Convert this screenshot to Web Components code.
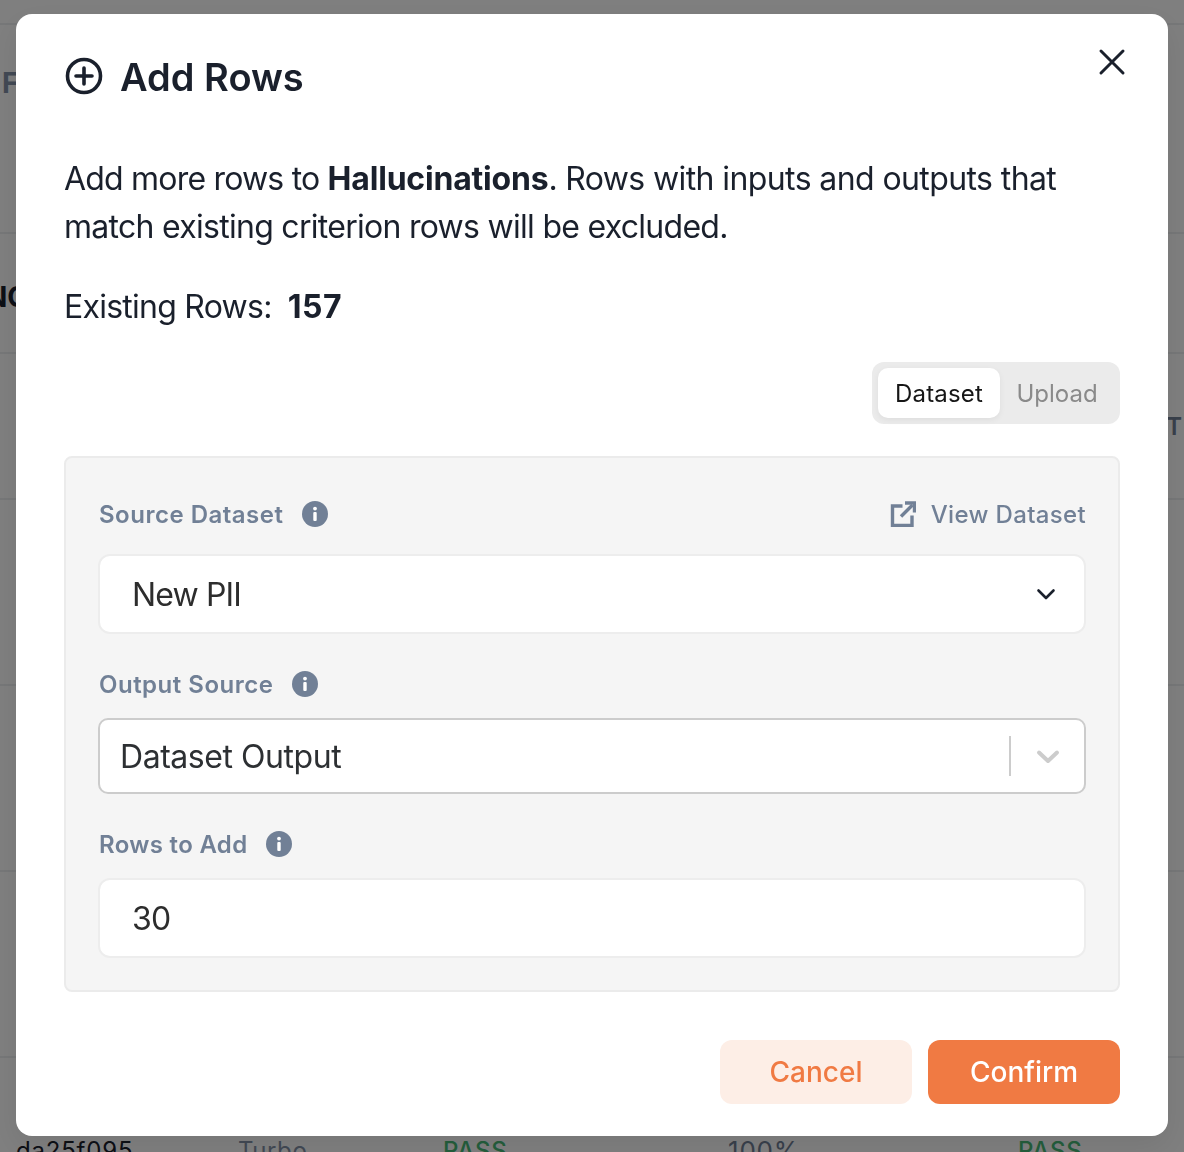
<!DOCTYPE html>
<html lang="en">
<head>
<meta charset="utf-8">
<title>Add Rows</title>
<style>
  html, body { margin: 0; height: 100%; background: #fff; overflow: hidden; }
  body { font-family: Inter, "Liberation Sans", sans-serif; color: #1a202c; }
</style>
</head>
<body>
<page-behind></page-behind>
<add-rows-modal dataset="Hallucinations" existing="157"></add-rows-modal>

<script>
const infoIcon = `
  <svg width="26" height="26" viewBox="0 0 26 26" aria-hidden="true">
    <circle cx="13" cy="13" r="13" fill="#718096"/>
    <circle cx="13" cy="7.6" r="1.9" fill="#fff"/>
    <rect x="11.3" y="11" width="3.4" height="9" rx="1" fill="#fff"/>
  </svg>`

class PageBehind extends HTMLElement {
  constructor() {
    super()
    this.attachShadow({ mode: 'open' })
  }

  connectedCallback() {
    this.shadowRoot.innerHTML = `
      <style>
        :host { display: block; height: 1152px; overflow: hidden; }
        .row { border-top: 2px solid #eceef1; box-sizing: border-box; display: flex; font-size: 24px; }
        .first { height: 23px; border: 0; }
        .head { height: 209px; color: #8492a8; font-size: 28px; font-weight: 700; padding: 41px 0 0 2px; }
        .nc { height: 120px; padding: 46px 0 0 0; font-size: 28px; font-weight: 700; color: #1a202c; margin-left: -14px; }
        .t { height: 146px; padding: 58px 2px 0 0; justify-content: flex-end; font-size: 24px; font-weight: 600; color: #718096; }
        .plain { height: 186px; }
        .last { height: 96px; padding-top: 78px; position: relative; letter-spacing: .8px; }
        .last span { position: absolute; top: 78px; line-height: 30px; }
        .pass { color: #48bb78; font-weight: 500; }
        .soft { color: #8492a8; }
        .muted { color: #718096; font-size: 26px; }
      </style>
      <div class="row first"></div>
      <div class="row head">F</div>
      <div class="row nc">NC</div>
      <div class="row t">T</div>
      <div class="row plain"></div>
      <div class="row plain"></div>
      <div class="row plain"></div>
      <div class="row last">
        <span style="left:16px">da25f095</span>
        <span class="soft" style="left:238px;letter-spacing:.6px">Turbo</span>
        <span class="pass" style="left:443px">PASS</span>
        <span class="muted" style="left:728px">100%</span>
        <span class="pass" style="left:1018px">PASS</span>
      </div>
    `
  }
}

class SegmentToggle extends HTMLElement {
  constructor() {
    super()
    this.attachShadow({ mode: 'open' })
  }

  connectedCallback() {
    this.shadowRoot.innerHTML = `
      <style>
        :host { display: flex; justify-content: flex-end; }
        .wrap { display: flex; background: #ebebeb; border-radius: 12px; padding: 6px; height: 62px; box-sizing: border-box; }
        .seg { font-size: 24px; width: 114px; height: 50px; display: flex; align-items: center; justify-content: center; color: #8a8a8a; border-radius: 10px; }
        .on { width: 122px; background: #fff; color: #161616; letter-spacing: .15px; box-shadow: 0 2px 6px rgba(0,0,0,.06); }
      </style>
      <div class="wrap">
        <div class="seg on">Dataset</div>
        <div class="seg">Upload</div>
      </div>
    `
  }
}

class FieldLabel extends HTMLElement {
  constructor() {
    super()
    this.attachShadow({ mode: 'open' })
  }

  connectedCallback() {
    this.shadowRoot.innerHTML = `
      <style>
        :host { display: flex; align-items: center; gap: 19px; padding-left: 1px; font-size: 24px; font-weight: 600; color: #718096; letter-spacing: .5px; height: 30px; }
        svg { display: block; }
      </style>
      <slot></slot>${infoIcon}
    `
  }
}

class ValueBox extends HTMLElement {
  constructor() {
    super()
    this.attachShadow({ mode: 'open' })
  }

  connectedCallback() {
    const kind = this.getAttribute('kind')
    let tail = ''
    if (kind === 'select') {
      tail = `<svg class="chev" width="24" height="24" viewBox="0 0 24 24" fill="none" stroke="#1a202c" stroke-width="2.6" stroke-linecap="round" stroke-linejoin="round"><path d="M4.500 8.500 12 16 19.500 8.500"/></svg>`
    }
    if (kind === 'control') {
      tail = `<i class="sep"></i><svg class="chev2" width="24" height="24" viewBox="0 0 24 24" fill="none" stroke="#cccccc" stroke-width="4" stroke-linecap="round" stroke-linejoin="round"><path d="M3 8.500 12 17 21 8.500"/></svg>`
    }
    this.shadowRoot.innerHTML = `
      <style>
        :host { display: flex; align-items: center; box-sizing: border-box; height: 80px; background: #fff; border: 2px solid #ededed; border-radius: 12px; padding: 0 26px 0 32px; font-size: 32px; letter-spacing: -.85px; color: #2d2d2d; }
        :host([kind=control]) { height: 76px; border-color: #cccccc; border-radius: 10px; padding: 0 24px 0 20px; letter-spacing: -.45px; color: #2d3033; }
        .text { flex: 1; }
        .chev { display: block; }
        .sep { display: block; width: 2px; height: 40px; background: #cccccc; margin-right: 25px; }
        .chev2 { display: block; }
      </style>
      <div class="text"><slot></slot></div>${tail}
    `
  }
}

class AddRowsModal extends HTMLElement {
  constructor() {
    super()
    this.attachShadow({ mode: 'open' })
  }

  connectedCallback() {
    const dataset = this.getAttribute('dataset')
    const existing = this.getAttribute('existing')
    this.shadowRoot.innerHTML = `
      <style>
        :host { position: fixed; inset: 0; display: flex; justify-content: center; padding-top: 14px; box-sizing: border-box; background: rgba(0,0,0,.5); }
        .modal { position: relative; width: 1152px; height: 1122px; box-sizing: border-box; background: #fff; border-radius: 16px; padding: 32px 48px; display: flex; flex-direction: column; box-shadow: 0 10px 30px rgba(0,0,0,.08); }
        .title { display: flex; align-items: center; gap: 16px; height: 60px; font-size: 38px; font-weight: 600; color: #1a202c; }
        .title svg { display: block; }
        .title span { position: relative; top: 1px; }
        .close { position: absolute; top: 32px; right: 40px; display: block; }
        p { margin: 49px 0 0; font-size: 32px; line-height: 48px; letter-spacing: -.72px; color: #1a202c; }
        p .lead { letter-spacing: -.8px; }
        p .mid { letter-spacing: -.6px; }
        b { font-weight: 700; }
        p b { letter-spacing: -.2px; }
        .count { margin: 32px 0 0; font-size: 32px; line-height: 48px; letter-spacing: -.75px; display: flex; gap: 16px; }
        .count b { letter-spacing: .6px; }
        segment-toggle { margin-top: 31px; }
        .panel { margin-top: 32px; background: #f5f5f5; border: 2px solid #ebebeb; border-radius: 8px; padding: 31px 32px 32px; height: 536px; box-sizing: border-box; }
        .between { display: flex; justify-content: space-between; align-items: center; height: 50px; }
        .view { display: flex; align-items: center; gap: 15px; font-size: 24px; font-weight: 500; letter-spacing: .35px; color: #718096; }
        .view svg { display: block; }
        value-box[kind=select] { margin-top: 15px; }
        .lab { display: flex; align-items: center; height: 50px; margin-top: 25px; }
        .lab + value-box { margin-top: 9px; }
        .actions { margin-top: 48px; display: flex; justify-content: flex-end; gap: 16px; }
        .btn { width: 192px; height: 64px; border-radius: 12px; display: flex; align-items: center; justify-content: center; font-size: 28px; font-weight: 500; }
        .cancel { background: #fdeee6; color: #f07a43; }
        .confirm { background: #f07a43; color: #fff; }
      </style>
      <div class="modal">
        <div class="title">
          <svg width="40" height="40" viewBox="0 0 40 40" fill="none" stroke="#1a202c" stroke-width="3.6" stroke-linecap="round"><circle cx="20" cy="20" r="16.500"/><path d="M20 12v16M12 20h16"/></svg>
          <span>Add Rows</span>
        </div>
        <svg class="close" width="32" height="32" viewBox="0 0 32 32" fill="none" stroke="#1a202c" stroke-width="3" stroke-linecap="round"><path d="M5 5 27 27M27 5 5 27"/></svg>
        <p><span class="lead">Add more rows to </span><b>${dataset}</b>. <span class="mid">Rows with inputs and outputs that</span> match existing criterion rows will be excluded.</p>
        <div class="count"><span>Existing Rows:</span><b>${existing}</b></div>
        <segment-toggle></segment-toggle>
        <div class="panel">
          <div class="between">
            <field-label>Source Dataset</field-label>
            <div class="view">
              <svg width="26" height="26" viewBox="0 0 26 26" fill="none" stroke="#718096" stroke-width="3.4"><path d="M12.500 5H2.500v19.500H22V14.500"/><path d="M11 15.500 22.500 4"/><path d="M15 2H24.500V11.500" stroke-linejoin="miter"/></svg>
              <span>View Dataset</span>
            </div>
          </div>
          <value-box kind="select">New PII</value-box>
          <div class="lab"><field-label>Output Source</field-label></div>
          <value-box kind="control">Dataset Output</value-box>
          <div class="lab"><field-label style="letter-spacing:.32px">Rows to Add</field-label></div>
          <value-box>30</value-box>
        </div>
        <div class="actions">
          <div class="btn cancel">Cancel</div>
          <div class="btn confirm">Confirm</div>
        </div>
      </div>
    `
  }
}

customElements.define('page-behind', PageBehind)
customElements.define('segment-toggle', SegmentToggle)
customElements.define('field-label', FieldLabel)
customElements.define('value-box', ValueBox)
customElements.define('add-rows-modal', AddRowsModal)
</script>
</body>
</html>
